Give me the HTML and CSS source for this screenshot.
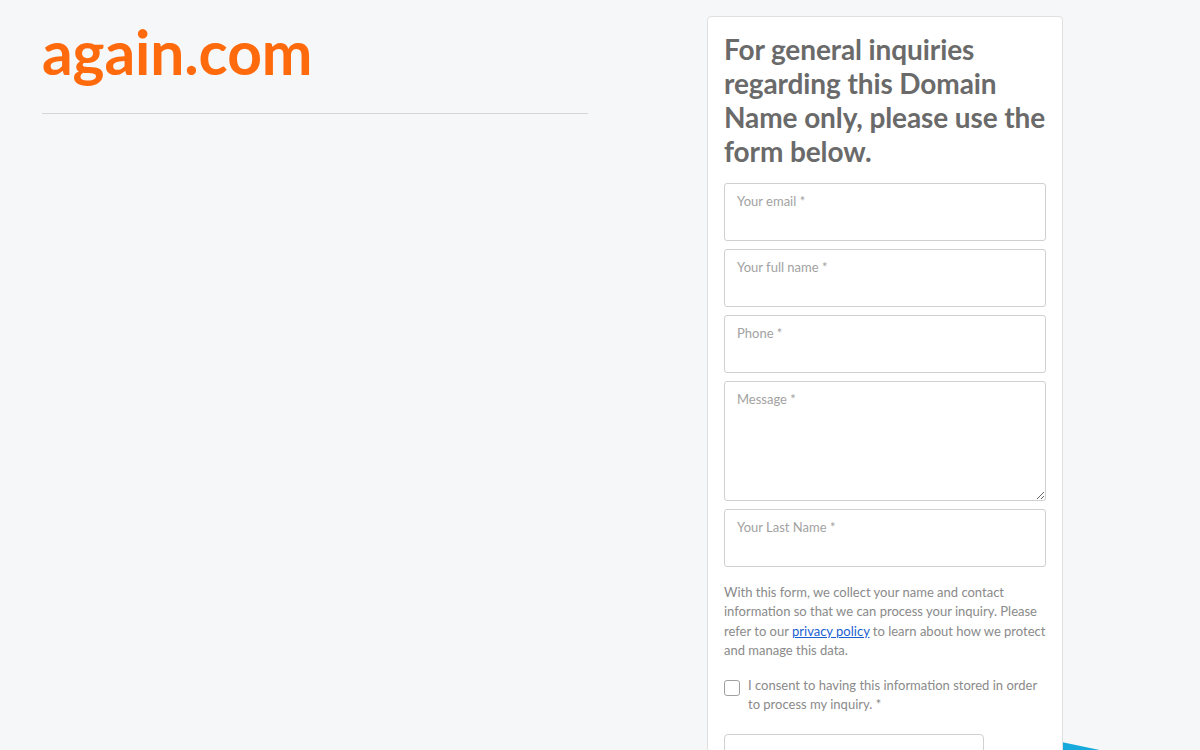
FILE: index.html
```html
<!DOCTYPE html>
<html lang="en">
<head>
<meta charset="utf-8">
<title>again.com</title>
<link rel="stylesheet" href="styles.css">
</head>
<body>
<svg class="deco" width="1200" height="750" viewBox="0 0 1200 750" aria-hidden="true">
  <polygon points="980,725 1200,771 1200,800 980,800" fill="#16a9dc"/>
</svg>
<div class="page">
  <div class="left">
    <h1 class="domain">again.com</h1>
    <hr class="rule">
  </div>
  <div class="card">
    <h2 class="card-title">For general inquiries regarding this Domain Name only, please use the form below.</h2>
    <form class="form">
      <textarea class="field" rows="1" placeholder="Your email *"></textarea>
      <textarea class="field" rows="1" placeholder="Your full name *"></textarea>
      <textarea class="field" rows="1" placeholder="Phone *"></textarea>
      <textarea class="field field-msg" placeholder="Message *"></textarea>
      <textarea class="field" rows="1" placeholder="Your Last Name *"></textarea>
      <p class="note">With this form, we collect your name and contact information so that we can process your inquiry. Please refer to our <a href="#">privacy policy</a> to learn about how we protect and manage this data.</p>
      <label class="consent">
        <span class="box"></span>
        <span>I consent to having this information stored in order to process my inquiry. *</span>
      </label>
      <div class="captcha"></div>
    </form>
  </div>
</div>
</body>
</html>
```

FILE: styles.css
```css
html, body {
  margin: 0;
  padding: 0;
}
body {
  background: #f6f7f9;
  font-family: Lato, "Open Sans", Arial, sans-serif;
  width: 1200px;
  height: 750px;
  overflow: hidden;
  position: relative;
}
.deco {
  position: absolute;
  left: 0;
  top: 0;
  z-index: 0;
}
.page {
  position: relative;
  z-index: 1;
  display: flex;
  align-items: flex-start;
  padding: 16px 0 0 42px;
  gap: 119px;
}
.left {
  width: 546px;
}
.domain {
  margin: 4px 0 0;
  font-size: 60.5px;
  line-height: 64px;
  font-weight: 700;
  color: #ff6a0d;
  letter-spacing: -0.1px;
}
.rule {
  margin: 29px 0 0;
  border: 0;
  border-top: 1px solid #d6d6d6;
  height: 0;
}
.card {
  width: 322px;
  background: #fff;
  border: 1px solid #e0e0e0;
  border-radius: 4px;
  padding: 15px 16px 40px;
}
.card-title {
  margin: 0 -14px 15px 0;
  font-size: 28px;
  line-height: 34px;
  font-weight: 700;
  color: #6a6a6a;
  letter-spacing: -0.1px;
}
.form {
  display: flex;
  flex-direction: column;
  gap: 8px;
}
.field {
  display: block;
  box-sizing: border-box;
  width: 322px;
  height: 58px;
  margin: 0;
  padding: 8px 12px;
  border: 1px solid #d0d0d0;
  border-radius: 3px;
  font-family: Lato, "Open Sans", Arial, sans-serif;
  font-size: 13px;
  line-height: 18px;
  color: #555;
  background: #fff;
  resize: none;
  overflow: hidden;
}
.field::placeholder {
  color: #a2a2a2;
}
.field-msg {
  height: 120px;
  resize: vertical;
}
.note {
  margin: 8px 0 0;
  font-size: 13px;
  line-height: 19.3px;
  color: #8a8a8a;
}
.note a {
  color: #1a5fd0;
}
.consent {
  display: flex;
  gap: 8px;
  margin-top: 8px;
  font-size: 13px;
  line-height: 19px;
  color: #8a8a8a;
}
.box {
  flex: 0 0 auto;
  box-sizing: border-box;
  width: 16px;
  height: 16px;
  margin-top: 4px;
  border: 1px solid #a0a0a0;
  border-radius: 3px;
  background: #fff;
}
.captcha {
  margin-top: 12px;
  box-sizing: border-box;
  width: 260px;
  height: 70px;
  border: 1px solid #d0d0d0;
  border-radius: 4px;
  background: #fff;
}
```
